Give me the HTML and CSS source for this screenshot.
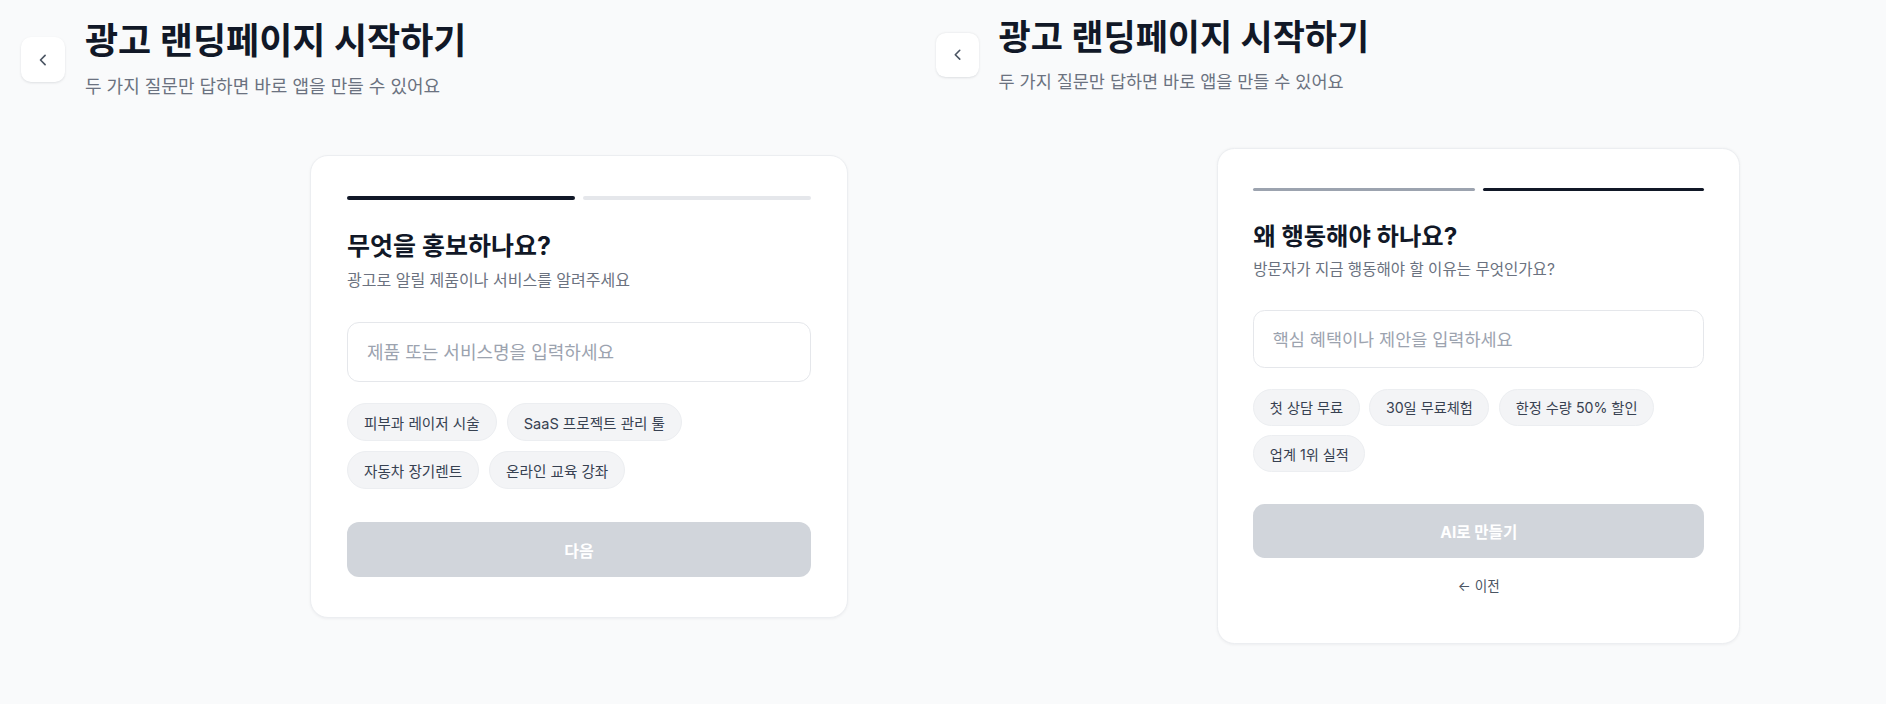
FILE: index.html
```html
<!DOCTYPE html>
<html lang="ko">
<head>
<meta charset="utf-8">
<title>광고 랜딩페이지 시작하기</title>
<link rel="stylesheet" href="styles.css">
</head>
<body>
<div class="split">
  <section class="panel panel-left">
    <div class="page">
      <header class="header">
        <button class="back" type="button" aria-label="뒤로">
          <svg viewBox="0 0 24 24" width="20" height="20"><path d="M14.5 17.5L9 12l5.5-5.5" fill="none" stroke="#4b5563" stroke-width="2" stroke-linecap="round" stroke-linejoin="round"/></svg>
        </button>
        <div class="titles">
          <h1 class="title">광고 랜딩페이지 시작하기</h1>
          <p class="subtitle">두 가지 질문만 답하면 바로 앱을 만들 수 있어요</p>
        </div>
      </header>
      <main class="card">
        <div class="progress"><span class="bar bar-dark"></span><span class="bar bar-light"></span></div>
        <h2 class="question">무엇을 홍보하나요?</h2>
        <p class="question-sub">광고로 알릴 제품이나 서비스를 알려주세요</p>
        <input class="field" type="text" placeholder="제품 또는 서비스명을 입력하세요">
        <div class="chips">
          <span class="chip">피부과 레이저 시술</span>
          <span class="chip">SaaS 프로젝트 관리 툴</span>
          <span class="chip">자동차 장기렌트</span>
          <span class="chip">온라인 교육 강좌</span>
        </div>
        <button class="primary" type="button">다음</button>
      </main>
    </div>
  </section>
  <section class="panel panel-right">
    <div class="page page-small">
      <header class="header">
        <button class="back" type="button" aria-label="뒤로">
          <svg viewBox="0 0 24 24" width="20" height="20"><path d="M14.5 17.5L9 12l5.5-5.5" fill="none" stroke="#4b5563" stroke-width="2" stroke-linecap="round" stroke-linejoin="round"/></svg>
        </button>
        <div class="titles">
          <h1 class="title">광고 랜딩페이지 시작하기</h1>
          <p class="subtitle">두 가지 질문만 답하면 바로 앱을 만들 수 있어요</p>
        </div>
      </header>
      <main class="card">
        <div class="progress"><span class="bar bar-mid"></span><span class="bar bar-dark"></span></div>
        <h2 class="question">왜 행동해야 하나요?</h2>
        <p class="question-sub">방문자가 지금 행동해야 할 이유는 무엇인가요?</p>
        <input class="field" type="text" placeholder="핵심 혜택이나 제안을 입력하세요">
        <div class="chips">
          <span class="chip">첫 상담 무료</span>
          <span class="chip">30일 무료체험</span>
          <span class="chip">한정 수량 50% 할인</span>
          <span class="chip">업계 1위 실적</span>
        </div>
        <button class="primary" type="button">AI로 만들기</button>
        <button class="prev" type="button">← 이전</button>
      </main>
    </div>
  </section>
</div>
</body>
</html>
```

FILE: styles.css
```css
* { box-sizing: border-box; }

html, body {
  margin: 0;
  padding: 0;
  height: 704px;
  overflow: hidden;
  background: #f9fafb;
  font-family: Inter, "Noto Sans CJK KR", "Noto Sans", sans-serif;
  color: #111827;
}

.split {
  display: flex;
  height: 704px;
}

.panel {
  overflow: hidden;
  height: 704px;
}

.panel-left { flex: 0 0 916px; }
.panel-right { flex: 1 1 auto; }

.page {
  width: 1158px;
  padding-top: 18px;
}

.page-small {
  zoom: 0.972;
  padding-top: 15px;
}

.header {
  display: flex;
  align-items: center;
  gap: 20px;
  padding-left: 21px;
}

.back {
  width: 44px;
  height: 45px;
  flex: 0 0 auto;
  border: none;
  border-radius: 10px;
  background: #ffffff;
  box-shadow: 0 1px 3px rgba(17, 24, 39, 0.08), 0 1px 2px rgba(17, 24, 39, 0.04);
  display: flex;
  align-items: center;
  justify-content: center;
  padding: 0;
}

.titles { display: flex; flex-direction: column; }

.title {
  margin: 0;
  font-size: 36px;
  line-height: 46px;
  font-weight: 700;
  letter-spacing: 0;
  color: #111827;
}

.subtitle {
  margin: 9px 0 0;
  font-size: 18px;
  line-height: 28px;
  color: #6b7280;
}

.card {
  width: 538px;
  margin: 54px auto 0;
  background: #ffffff;
  border: 1px solid #eceef1;
  border-radius: 18px;
  box-shadow: 0 1px 3px rgba(17, 24, 39, 0.05);
  padding: 40px 36px;
  display: flex;
  flex-direction: column;
}

.progress {
  display: flex;
  gap: 8px;
  height: 4px;
}

.bar {
  flex: 1 1 0;
  border-radius: 2px;
}

.bar-dark { background: #111827; }
.bar-light { background: #e5e7eb; }
.bar-mid { background: #9ca3af; }

.question {
  margin: 30px 0 0;
  font-size: 25px;
  line-height: 32px;
  font-weight: 700;
  color: #111827;
}

.question-sub {
  margin: 7px 0 0;
  font-size: 16px;
  line-height: 22px;
  color: #6b7280;
}

.field {
  margin-top: 31px;
  height: 60px;
  width: 100%;
  border: 1.5px solid #e5e7eb;
  border-radius: 12px;
  padding: 0 19px;
  font-family: Inter, "Noto Sans CJK KR", sans-serif;
  font-size: 18px;
  color: #111827;
  background: #ffffff;
  outline: none;
}

.field::placeholder { color: #9ca3af; }

.chips {
  margin-top: 21px;
  display: flex;
  flex-wrap: wrap;
  gap: 10px;
}

.chip {
  height: 38px;
  padding: 0 16px;
  display: inline-flex;
  align-items: center;
  border-radius: 999px;
  background: #f3f4f6;
  border: 1px solid #eceef1;
  font-size: 14.6px;
  color: #374151;
  white-space: nowrap;
}

.primary {
  margin-top: 33px;
  height: 55px;
  width: 100%;
  border: none;
  border-radius: 12px;
  background: #d1d5db;
  color: #ffffff;
  font-family: Inter, "Noto Sans CJK KR", sans-serif;
  font-size: 16px;
  font-weight: 700;
}

.prev {
  margin: 12px auto 0;
  padding: 8px 12px;
  border: none;
  background: transparent;
  font-family: Inter, "Noto Sans CJK KR", sans-serif;
  font-size: 14px;
  line-height: 20px;
  color: #4b5563;
}
```
